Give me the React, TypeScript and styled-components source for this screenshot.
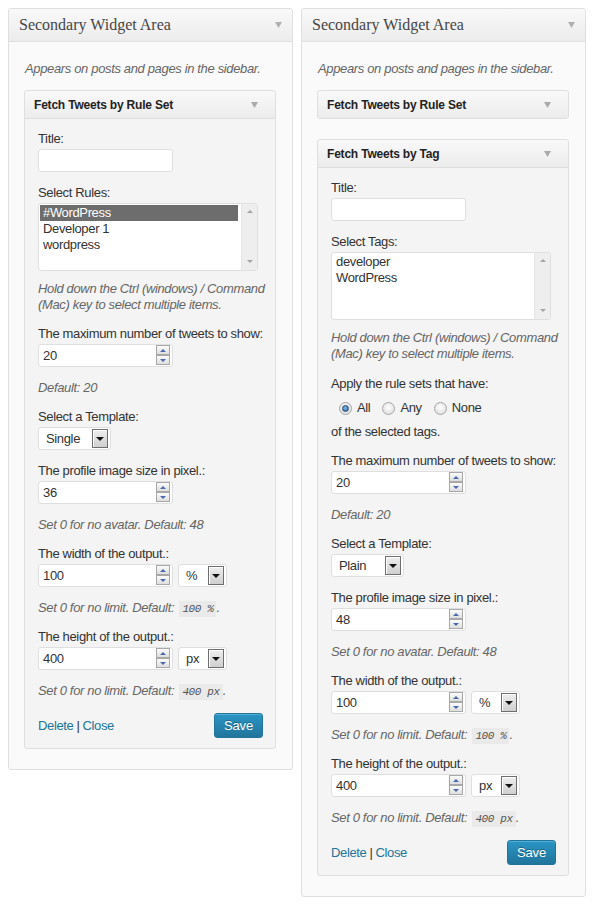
import React from 'react';
import styled, { createGlobalStyle, css } from 'styled-components';

const GlobalStyle = createGlobalStyle`
  body {
    margin: 8px;
    background: #fff;
    font-family: "Liberation Sans", Arial, sans-serif;
    font-size: 13px;
    letter-spacing: -0.35px;
    color: #333;
  }
`;

const Columns = styled.div`
  display: flex;
  align-items: flex-start;
  gap: 8px;
`;

const Sidebar = styled.section`
  width: 285px;
  box-sizing: border-box;
  border: 1px solid #dfdfdf;
  border-radius: 3px;
  background: #fafafa;
`;

const SidebarHeader = styled.div`
  height: 32px;
  display: flex;
  align-items: center;
  justify-content: space-between;
  padding: 0 10px;
  border-bottom: 1px solid #dfdfdf;
  border-radius: 3px 3px 0 0;
  background: linear-gradient(to bottom, #f9f9f9, #ececec);
  font-family: "Liberation Serif", Georgia, serif;
  font-size: 16px;
  letter-spacing: 0;
  color: #464646;
`;

const SidebarBody = styled.div`
  padding: 19px 16px 20px 15px;
`;

const Description = styled.p`
  margin: 0 0 13px;
  padding-left: 1px;
  line-height: 16px;
  font-style: italic;
  color: #666;
`;

const Widget = styled.div`
  border: 1px solid #dfdfdf;
  border-radius: 3px;
  background: #f4f4f4;

  & + & {
    margin-top: 20px;
  }
`;

const WidgetHeader = styled.div<{ $open?: boolean }>`
  height: 27px;
  display: flex;
  align-items: center;
  justify-content: space-between;
  padding: 0 17px 0 9px;
  border-radius: 3px 3px 0 0;
  background: linear-gradient(to bottom, #f9f9f9, #ececec);
  ${(p) =>
    p.$open &&
    css`
      border-bottom: 1px solid #dfdfdf;
    `}
`;

const WidgetTitle = styled.h4`
  margin: 0;
  font-size: 12px;
  font-weight: bold;
  letter-spacing: -0.2px;
  color: #222;
`;

const WidgetBody = styled.div`
  display: flex;
  flex-direction: column;
  gap: 13px;
  padding: 12px 12px 10px 13px;
`;

const Field = styled.div`
  display: flex;
  flex-direction: column;
  align-items: flex-start;
`;

const Label = styled.label`
  display: block;
  line-height: 16px;
  margin-bottom: 2px;
  white-space: nowrap;
`;

const Hint = styled.p<{ $tight?: boolean }>`
  margin: ${(p) => (p.$tight ? '-3px 0 0' : '0')};
  line-height: 16px;
  font-style: italic;
  color: #666;
  white-space: nowrap;
`;

const Code = styled.code`
  font-family: "Liberation Mono", "Courier New", monospace;
  font-size: 11px;
  line-height: 1;
  letter-spacing: -0.4px;
  padding: 2px 3px;
  margin-left: 2px;
  background: #eaeaea;
  color: #555;
`;

const Box = styled.div<{ $width: number }>`
  width: ${(p) => p.$width}px;
  height: 23px;
  box-sizing: border-box;
  display: flex;
  align-items: center;
  border: 1px solid #dfdfdf;
  border-radius: 3px;
  background: #fff;
  color: #333;
`;

const NumberBox = styled(Box)`
  padding-left: 4px;
  justify-content: space-between;
`;

const Spinner = styled.div`
  display: flex;
  flex-direction: column;
  margin-right: 2px;
  align-self: flex-start;
`;

const SpinButton = styled.span`
  width: 14px;
  height: 10px;
  box-sizing: border-box;
  display: flex;
  align-items: center;
  justify-content: center;
  border: 1px solid #a8a8a8;
  background: linear-gradient(to bottom, #fbfbfb, #dedede);
`;

const SpinArrow = styled.span<{ $up?: boolean }>`
  width: 0;
  height: 0;
  border-left: 3px solid transparent;
  border-right: 3px solid transparent;
  ${(p) =>
    p.$up
      ? css`border-bottom: 3px solid #4d68ac;`
      : css`border-top: 3px solid #4d68ac;`}
`;

const SelectBox = styled(Box)`
  justify-content: space-between;
  padding: 0 2px 0 7px;
`;

const DropButton = styled.span`
  width: 16px;
  height: 19px;
  box-sizing: border-box;
  display: flex;
  align-items: center;
  justify-content: center;
  border: 1px solid #6e6e6e;
  box-shadow: inset 1px 1px 0 #fff;
  background: linear-gradient(to bottom, #eeeeee, #cfcfcf);

  &::after {
    content: '';
    border-left: 4px solid transparent;
    border-right: 4px solid transparent;
    border-top: 4px solid #111;
  }
`;

const ControlRow = styled.div`
  display: flex;
  gap: 5px;
`;

const ListFrame = styled.div`
  width: 220px;
  height: 68px;
  box-sizing: border-box;
  display: flex;
  border: 1px solid #dfdfdf;
  border-radius: 3px;
  background: #fff;
`;

const ListItems = styled.div`
  flex: 1;
  padding: 1px 3px 1px 1px;
`;

const ListItem = styled.div<{ $selected?: boolean }>`
  line-height: 16px;
  padding-left: 3px;
  ${(p) =>
    p.$selected &&
    css`
      background: #6d6d6d;
      color: #fff;
    `}
`;

const ScrollTrack = styled.div`
  width: 15px;
  display: flex;
  flex-direction: column;
  align-items: center;
  justify-content: space-between;
  padding: 6px 0 7px;
  border-left: 1px solid #e6e6e6;
  background: #eeeeee;
`;

const ScrollArrow = styled.span<{ $up?: boolean }>`
  border-left: 3px solid transparent;
  border-right: 3px solid transparent;
  ${(p) =>
    p.$up
      ? css`border-bottom: 3px solid #a3a3a3;`
      : css`border-top: 3px solid #a3a3a3;`}
`;

const RadioBlock = styled.div`
  margin-top: 1px;
  line-height: 16px;
`;

const RadioRow = styled.div`
  height: 18px;
  margin: 7px 0;
  padding-left: 8px;
  display: flex;
  align-items: center;
  gap: 12px;
`;

const RadioOption = styled.label`
  display: flex;
  align-items: center;
  gap: 5px;
`;

const Radio = styled.span<{ $checked?: boolean }>`
  position: relative;
  width: 13px;
  height: 13px;
  box-sizing: border-box;
  border-radius: 50%;
  border: 1px solid #a6a6a6;
  background: radial-gradient(circle at 50% 40%, #ffffff, #d8d8d8);
  ${(p) =>
    p.$checked &&
    css`
      &::after {
        content: '';
        position: absolute;
        inset: 2px;
        border-radius: 50%;
        border: 1px solid #2a4a6e;
        background: radial-gradient(circle at 45% 40%, #7cc0f0, #1d5d9e);
      }
    `}
`;

const Footer = styled.div`
  margin-top: 1px;
  display: flex;
  align-items: center;
  justify-content: space-between;
`;

const Link = styled.a`
  color: #21759b;
  text-decoration: none;
`;

const Separator = styled.span`
  color: #333;
  padding: 0 3px;
`;

const SaveButton = styled.button`
  width: 49px;
  height: 25px;
  padding: 0;
  border: 1px solid #21759b;
  border-radius: 3px;
  background: linear-gradient(to bottom, #2a95c5, #21759b);
  box-shadow: inset 0 1px 0 rgba(120, 200, 230, 0.5);
  color: #fff;
  font-family: inherit;
  font-size: 13px;
  letter-spacing: -0.2px;
  text-shadow: 0 -1px 0 rgba(0, 0, 0, 0.3);
`;

const Caret = ({ color = '#aaa' }: { color?: string }) => (
  <svg width="7" height="6" viewBox="0 0 7 6">
    <polygon points="0,0 7,0 3.5,6" fill={color} />
  </svg>
);

const NumberInput = ({ value }: { value: string }) => (
  <NumberBox $width={135}>
    <span>{value}</span>
    <Spinner>
      <SpinButton>
        <SpinArrow $up />
      </SpinButton>
      <SpinButton>
        <SpinArrow />
      </SpinButton>
    </Spinner>
  </NumberBox>
);

const Select = ({ value, width }: { value: string; width: number }) => (
  <SelectBox $width={width}>
    <span>{value}</span>
    <DropButton />
  </SelectBox>
);

const ListBox = ({ items, selected }: { items: string[]; selected?: number }) => (
  <ListFrame>
    <ListItems>
      {items.map((item, i) => (
        <ListItem key={item} $selected={i === selected}>
          {item}
        </ListItem>
      ))}
    </ListItems>
    <ScrollTrack>
      <ScrollArrow $up />
      <ScrollArrow />
    </ScrollTrack>
  </ListFrame>
);

type FormProps = {
  listLabel: string;
  items: string[];
  selected?: number;
  withRuleFilter?: boolean;
  template: string;
  imageSize: string;
};

const FetchForm = ({ listLabel, items, selected, withRuleFilter, template, imageSize }: FormProps) => (
  <WidgetBody>
    <Field>
      <Label>Title:</Label>
      <Box $width={135} />
    </Field>
    <Field>
      <Label>{listLabel}</Label>
      <ListBox items={items} selected={selected} />
    </Field>
    <Hint $tight>
      Hold down the Ctrl (windows) / Command
      <br />
      (Mac) key to select multiple items.
    </Hint>
    {withRuleFilter && (
      <RadioBlock>
        <div>Apply the rule sets that have:</div>
        <RadioRow>
          <RadioOption>
            <Radio $checked /> All
          </RadioOption>
          <RadioOption>
            <Radio /> Any
          </RadioOption>
          <RadioOption>
            <Radio /> None
          </RadioOption>
        </RadioRow>
        <div>of the selected tags.</div>
      </RadioBlock>
    )}
    <Field>
      <Label>The maximum number of tweets to show:</Label>
      <NumberInput value="20" />
    </Field>
    <Hint>Default: 20</Hint>
    <Field>
      <Label>Select a Template:</Label>
      <Select value={template} width={73} />
    </Field>
    <Field>
      <Label>The profile image size in pixel.:</Label>
      <NumberInput value={imageSize} />
    </Field>
    <Hint>Set 0 for no avatar. Default: 48</Hint>
    <Field>
      <Label>The width of the output.:</Label>
      <ControlRow>
        <NumberInput value="100" />
        <Select value="%" width={49} />
      </ControlRow>
    </Field>
    <Hint>
      Set 0 for no limit. Default: <Code>100 %</Code>.
    </Hint>
    <Field>
      <Label>The height of the output.:</Label>
      <ControlRow>
        <NumberInput value="400" />
        <Select value="px" width={49} />
      </ControlRow>
    </Field>
    <Hint>
      Set 0 for no limit. Default: <Code>400 px</Code>.
    </Hint>
    <Footer>
      <span>
        <Link href="#">Delete</Link>
        <Separator>|</Separator>
        <Link href="#">Close</Link>
      </span>
      <SaveButton>Save</SaveButton>
    </Footer>
  </WidgetBody>
);

const WidgetArea = ({ children }: { children: React.ReactNode }) => (
  <Sidebar>
    <SidebarHeader>
      Secondary Widget Area
      <Caret color="#b0b0b0" />
    </SidebarHeader>
    <SidebarBody>
      <Description>Appears on posts and pages in the sidebar.</Description>
      {children}
    </SidebarBody>
  </Sidebar>
);

export default function App() {
  return (
    <>
      <GlobalStyle />
      <Columns>
        <WidgetArea>
          <Widget>
            <WidgetHeader $open>
              <WidgetTitle>Fetch Tweets by Rule Set</WidgetTitle>
              <Caret />
            </WidgetHeader>
            <FetchForm
              listLabel="Select Rules:"
              items={['#WordPress', 'Developer 1', 'wordpress']}
              selected={0}
              template="Single"
              imageSize="36"
            />
          </Widget>
        </WidgetArea>
        <WidgetArea>
          <Widget>
            <WidgetHeader>
              <WidgetTitle>Fetch Tweets by Rule Set</WidgetTitle>
              <Caret />
            </WidgetHeader>
          </Widget>
          <Widget>
            <WidgetHeader $open>
              <WidgetTitle>Fetch Tweets by Tag</WidgetTitle>
              <Caret />
            </WidgetHeader>
            <FetchForm
              listLabel="Select Tags:"
              items={['developer', 'WordPress']}
              withRuleFilter
              template="Plain"
              imageSize="48"
            />
          </Widget>
        </WidgetArea>
      </Columns>
    </>
  );
}
